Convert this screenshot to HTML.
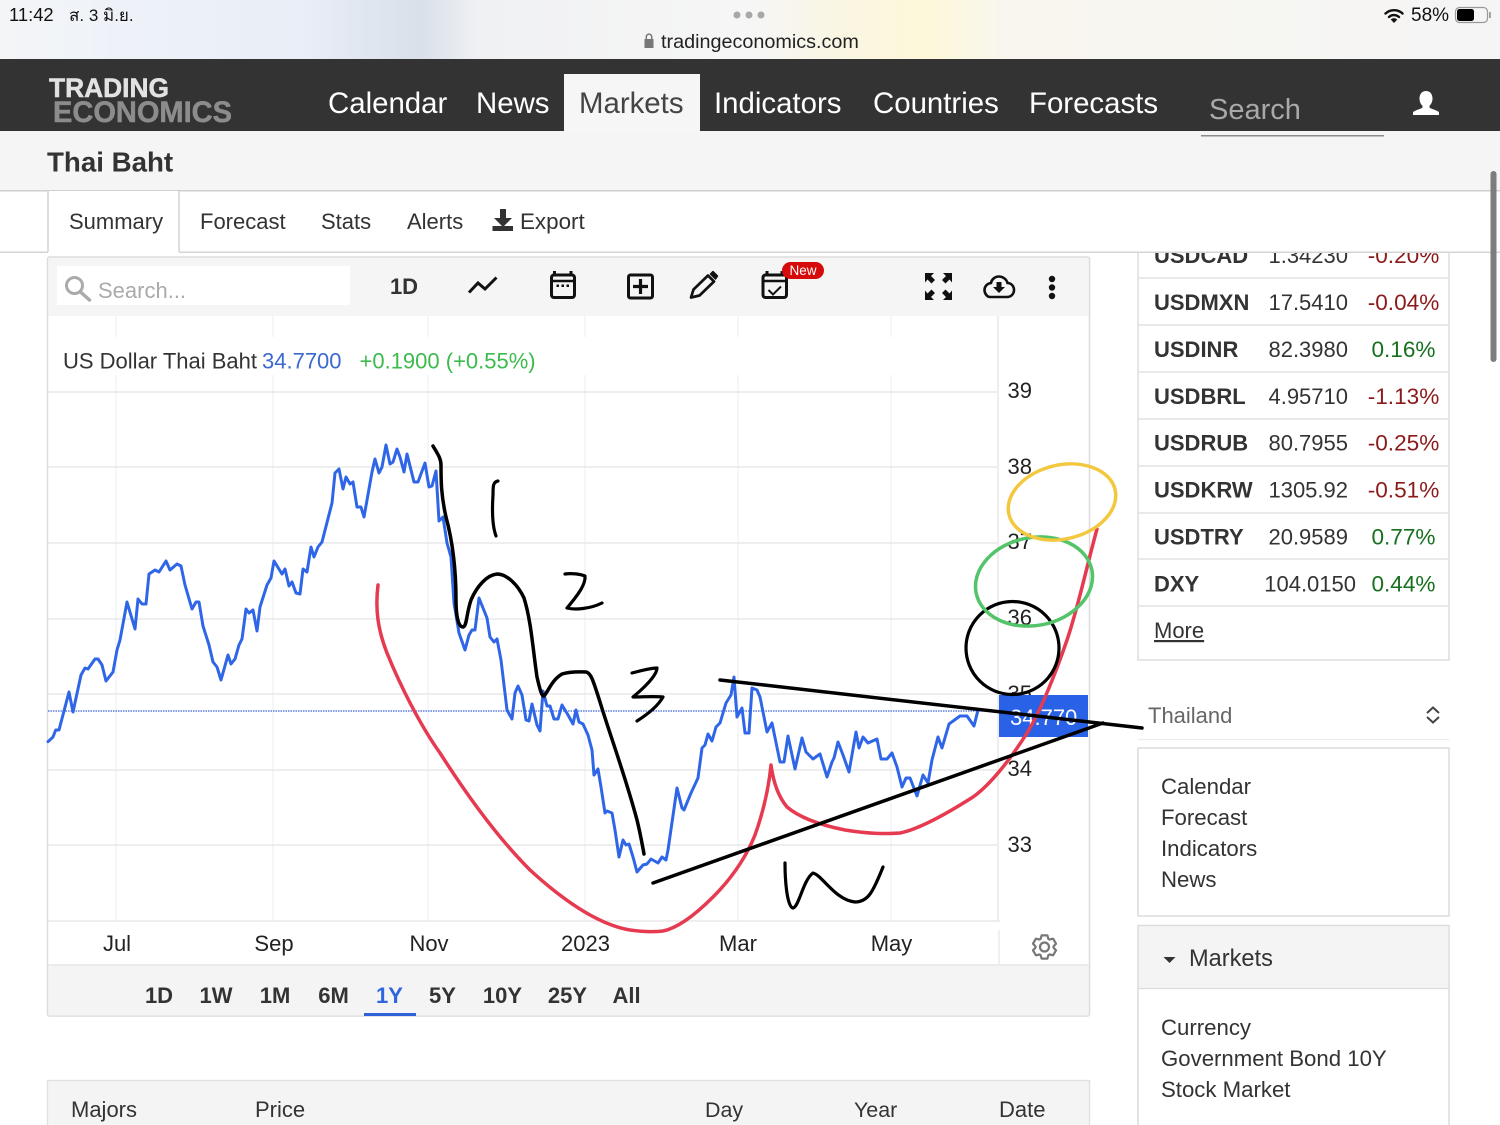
<!DOCTYPE html>
<html lang="en"><head><meta charset="utf-8"><title>Thai Baht</title>
<style>
html,body{margin:0;padding:0;background:#fff;width:1500px;height:1125px;overflow:hidden}
svg{display:block}
text{font-family:"Liberation Sans","Noto Sans CJK SC",sans-serif;font-size:22px;fill:#333}
.b{font-weight:700}
.nav{font-size:29.4px;fill:#fff}
.ax{fill:#222}
.r{fill:#8b1a1a;font-size:22.6px}.g{fill:#17701f;font-size:22.6px}
.s{font-size:22.2px}
.hand{fill:none;stroke-linecap:round;stroke-linejoin:round}
</style></head><body>
<svg width="1500" height="1125" viewBox="0 0 1500 1125" xmlns="http://www.w3.org/2000/svg">
<defs>
<linearGradient id="st" x1="0" x2="1" y1="0" y2="0">
<stop offset="0" stop-color="#f4f5f7"/><stop offset=".08" stop-color="#eef2f8"/><stop offset=".2" stop-color="#e9eef7"/><stop offset=".28" stop-color="#d9e0ea"/><stop offset=".32" stop-color="#f0f1f3"/><stop offset=".5" stop-color="#f6f6f6"/><stop offset=".57" stop-color="#fbf6e0"/><stop offset=".62" stop-color="#fdf8da"/><stop offset=".67" stop-color="#f8f6ee"/><stop offset="1" stop-color="#f5f5f6"/>
</linearGradient>
</defs>
<rect width="1500" height="1125" fill="#fff"/>

<!-- right market table -->
<rect x="1138" y="240" width="311" height="420" fill="#fff" stroke="#ddd" stroke-width="1.5"/>
<g stroke="#e2e2e2" stroke-width="1.5"><path d="M1138 278H1449M1138 325H1449M1138 372H1449M1138 419H1449M1138 466H1449M1138 513H1449M1138 559H1449M1138 606H1449"/></g>
<g>
<text class="b" x="1154" y="263">USDCAD</text><text x="1348" y="263" text-anchor="end">1.34230</text><text class="r" x="1403.5" y="263" text-anchor="middle">-0.20%</text>
<text class="b" x="1154" y="310">USDMXN</text><text x="1348" y="310" text-anchor="end">17.5410</text><text class="r" x="1403.5" y="310" text-anchor="middle">-0.04%</text>
<text class="b" x="1154" y="357">USDINR</text><text x="1348" y="357" text-anchor="end">82.3980</text><text class="g" x="1403.5" y="357" text-anchor="middle">0.16%</text>
<text class="b" x="1154" y="404">USDBRL</text><text x="1348" y="404" text-anchor="end">4.95710</text><text class="r" x="1403.5" y="404" text-anchor="middle">-1.13%</text>
<text class="b" x="1154" y="450.5">USDRUB</text><text x="1348" y="450.5" text-anchor="end">80.7955</text><text class="r" x="1403.5" y="450.5" text-anchor="middle">-0.25%</text>
<text class="b" x="1154" y="497.5">USDKRW</text><text x="1348" y="497.5" text-anchor="end">1305.92</text><text class="r" x="1403.5" y="497.5" text-anchor="middle">-0.51%</text>
<text class="b" x="1154" y="544.5">USDTRY</text><text x="1348" y="544.5" text-anchor="end">20.9589</text><text class="g" x="1403.5" y="544.5" text-anchor="middle">0.77%</text>
<text class="b" x="1154" y="591.5">DXY</text><text x="1356" y="591.5" text-anchor="end">104.0150</text><text class="g" x="1403.5" y="591.5" text-anchor="middle">0.44%</text>
<text x="1154" y="638" text-decoration="underline">More</text>
</g>

<!-- status bar -->
<rect width="1500" height="59" fill="url(#st)"/>
<text x="9" y="21" style="font-size:18.4px;fill:#111">11:42</text>
<text x="69" y="21" style="font-size:17px;fill:#111">ส. 3 มิ.ย.</text>
<g fill="#a8a8a8"><circle cx="737" cy="15" r="3.5"/><circle cx="749" cy="15" r="3.5"/><circle cx="761" cy="15" r="3.5"/></g>
<path d="M644.500 39h9v9h-9z" fill="#777"/><path d="M646.300 39v-2.200a2.700 2.700 0 0 1 5.400 0V39" fill="none" stroke="#777" stroke-width="1.500"/>
<text x="661" y="48" style="font-size:19.800px;fill:#222">tradingeconomics.com</text>
<g fill="none" stroke="#111" stroke-width="2.400" stroke-linecap="round"><path d="M1385.500 13.500a12.500 12.500 0 0 1 17 0"/><path d="M1389 17a7.500 7.500 0 0 1 10 0"/></g>
<path d="M1394 23l-3.300-3.500a4.800 4.800 0 0 1 6.600 0z" fill="#111"/>
<text x="1411" y="21" style="font-size:19px;fill:#111">58%</text>
<rect x="1455.500" y="7.500" width="32" height="15" rx="4" fill="none" stroke="#999" stroke-width="1.200"/>
<rect x="1457" y="9" width="17" height="12" rx="2.500" fill="#000"/>
<rect x="1489" y="12" width="1.800" height="6" fill="#999"/>

<!-- header -->
<rect y="59" width="1500" height="72" fill="#333"/>
<text class="b" x="49" y="97" textLength="120" lengthAdjust="spacingAndGlyphs" style="font-size:26.400px;fill:#e2e2e2;stroke:#e2e2e2;stroke-width:.5">TRADING</text>
<text class="b" x="53" y="122" textLength="179" lengthAdjust="spacingAndGlyphs" style="font-size:30px;fill:#8c8c8c;stroke:#8c8c8c;stroke-width:.5">ECONOMICS</text>
<rect x="564" y="74" width="136" height="58" fill="#f6f6f6"/>
<text class="nav" x="328" y="113">Calendar</text>
<text class="nav" x="476" y="113">News</text>
<text class="nav" x="579" y="113" style="fill:#444">Markets</text>
<text class="nav" x="714" y="113">Indicators</text>
<text class="nav" x="873" y="113">Countries</text>
<text class="nav" x="1029" y="113">Forecasts</text>
<text x="1209" y="119" style="font-size:29px;fill:#a9a9a9">Search</text>
<path d="M1426 91c-4.300 0-6.500 3.400-6.500 7.500 0 3.200 1.300 5.800 3 7.300v1.700c-1 1.200-6 2.300-9.500 4.500v3h26v-3c-3.500-2.200-8.500-3.300-9.500-4.500v-1.700c1.700-1.500 3-4.100 3-7.300 0-4.100-2.200-7.500-6.500-7.500z" fill="#fff"/>

<!-- title strip -->
<rect y="131" width="1500" height="59" fill="#f5f5f5"/>
<rect x="1201" y="135" width="183" height="1.500" fill="#8a8a8a"/>
<rect x="564" y="131" width="136" height="2" fill="#f6f6f6"/>
<text class="b" x="47" y="171.500" style="font-size:27.700px">Thai Baht</text>

<!-- tabs strip -->
<rect y="190.500" width="1500" height="62" fill="#fff"/>
<rect y="190" width="1500" height="1.500" fill="#cfcfcf"/>
<rect y="251.500" width="1500" height="1.500" fill="#d4d4d4"/>
<rect x="48" y="191" width="131" height="64" fill="#fff"/>
<path d="M48 191V252M179 191V252" stroke="#d4d4d4" stroke-width="1.500"/>
<text x="69" y="229">Summary</text>
<text x="200" y="229">Forecast</text>
<text x="321" y="229">Stats</text>
<text x="407" y="229">Alerts</text>
<path d="M500 209h6v9h6l-9 9-9-9h6z" fill="#333"/>
<rect x="492.500" y="226" width="20.500" height="5" fill="#333"/>
<text x="520" y="229" style="font-size:22.400px">Export</text>

<!-- scrollbar -->
<rect x="1490.500" y="171" width="6" height="191" rx="3" fill="#7d7d7d"/>

<!-- chart card -->
<rect x="47.500" y="257" width="1042" height="759" rx="2" fill="#fff" stroke="#dcdcdc" stroke-width="1.500"/>
<rect x="48.500" y="258" width="1040" height="58" fill="#f5f5f5"/>
<rect x="57" y="266" width="293" height="39" fill="#fff"/>
<circle cx="74.500" cy="285.500" r="8" fill="none" stroke="#aaa" stroke-width="3"/>
<path d="M80.500 292L89.500 300" stroke="#aaa" stroke-width="3.500" stroke-linecap="round"/>
<text x="98" y="298" style="fill:#aaa">Search...</text>
<text class="b" x="404" y="294" text-anchor="middle">1D</text>
<path d="M469 292.500L478 283L485 289L496.500 277.500" fill="none" stroke="#111" stroke-width="3"/>
<g fill="none" stroke="#111" stroke-width="3">
<rect x="551.500" y="275" width="23" height="22.500" rx="2.500"/>
<path d="M554.500 271v4M571 271v4"/>
<path d="M551.500 281h23" stroke-width="2.600"/>
</g>
<g fill="#111"><rect x="556.500" y="284.500" width="2.500" height="2.500"/><rect x="561.500" y="284.500" width="2.500" height="2.500"/><rect x="566.500" y="284.500" width="2.500" height="2.500"/></g>
<rect x="628.500" y="275" width="24" height="23" rx="2" fill="none" stroke="#111" stroke-width="3"/>
<path d="M640.500 279v15M633 286.500h15" stroke="#111" stroke-width="3.200"/>
<path d="M691 297.500L693.500 289.500L708 275.500L714 281.500L699.500 295.500Z" fill="none" stroke="#111" stroke-width="2.700" stroke-linejoin="round"/>
<path d="M710.500 274L713 271.500L717.500 276L715.500 279Z" fill="#111" stroke="#111" stroke-width="1.500" stroke-linejoin="round"/>
<g fill="none" stroke="#111" stroke-width="3">
<rect x="763" y="275" width="23.500" height="22.500" rx="2.500"/>
<path d="M767 271v4M782 271v4"/>
<path d="M763 281h23.500" stroke-width="2.600"/>
<path d="M768.500 290l4.500 4.500 8-8" stroke-width="2"/>
</g>
<rect x="782" y="262" width="42" height="17" rx="8.500" fill="#d60a0a"/>
<text x="803" y="275" text-anchor="middle" style="font-size:13.500px;fill:#fff">New</text>
<g fill="#111">
<path d="M925 273h9l-3 3 4 4-3.500 3.500-4-4-2.500 3z"/>
<path d="M952 273h-9l3 3-4 4 3.500 3.500 4-4 2.500 3z"/>
<path d="M925 300h9l-3-3 4-4-3.500-3.500-4 4-2.500-3z"/>
<path d="M952 300h-9l3-3-4-4 3.500-3.500 4 4 2.500-3z"/>
</g>
<path d="M990 297h17c4 0 7-3 7-7s-3-7-6.500-7c-1-4-5-6.500-8.500-6.500-4 0-7.500 3-8 6.500-4 .5-6.500 3.500-6.500 7 0 4 3 7 5.500 7z" fill="none" stroke="#111" stroke-width="2.600"/>
<path d="M996.500 282h5v5h3.500l-6 6-6-6h3.500z" fill="#111"/>
<g fill="#111"><circle cx="1052" cy="279" r="3.200"/><circle cx="1052" cy="287.500" r="3.200"/><circle cx="1052" cy="296" r="3.200"/></g>

<!-- grid -->
<g stroke="#eef0f6" stroke-width="1.200">
<path d="M116 316V921M273 316V921M428 316V921M585 316V921M738 316V921M891 316V921"/>
</g>
<rect x="49" y="337" width="940" height="38" fill="#fff"/>
<g stroke="#e4e4e4" stroke-width="1.300">
<path d="M48 392H997M48 467H997M48 543H997M48 619H997M48 694H997M48 770H997M48 845H997M48 921H1000"/>
</g>
<path d="M998 316V921" stroke="#e4e4e4" stroke-width="1.300"/>
<path d="M999 930V965" stroke="#e8e8e8" stroke-width="1.300"/>
<path d="M48 711H999" stroke="#3a63dd" stroke-width="1.200" stroke-dasharray="1.500 1"/>

<text x="63" y="368.500">US Dollar Thai Baht</text>
<text x="262" y="368.500" style="fill:#3c69d0">34.7700</text>
<text x="359.500" y="368.500" style="fill:#3dba4e">+0.1900 (+0.55%)</text>

<!-- y axis -->
<g>
<text class="ax" x="1007.500" y="398">39</text>
<text class="ax" x="1007.500" y="474">38</text>
<text class="ax" x="1007.500" y="549">37</text>
<text class="ax" x="1007.500" y="625">36</text>
<text class="ax" x="1007.500" y="701">35</text>
<text class="ax" x="1007.500" y="776">34</text>
<text class="ax" x="1007.500" y="852">33</text>
</g>
<rect x="999" y="695" width="89" height="42" fill="#2962e6"/>
<text x="1010" y="725" style="fill:#fff">34.770</text>

<!-- blue price line -->
<polyline class="hand" stroke="#2f66e8" stroke-width="3" points="48,741.700 53,737 55.700,730 59,730 69,692 73,712 81,675 85,668 88,669 95,659 98,659 102,665 106,681 113,672 117,650 120,640 127,602 135,629 138,599 142,604 146,604 149,574 155,570 159,572 166,561 170,570 177,564 181,566 185,585 192,609 196,602 199,602 203,626 209,645 213,662 217,667 221,680 228,655 231,664 235,659 239,645 242,639 246,609 249,613 253,610 257,631 260,607 267,585 271,578 274,561 282,574 285,569 289,586 292,582 296,593 300,594 303,569 307,572 311,547 314,557 318,547 322,542 332,503 335,473 339,469 343,489 346,477 350,484 353,482 357,507 361,507 364,517 372,472 375,459 379,473 382,467 386,445 390,464 393,462 397,449 400,457 404,472 407,454 414,482 418,482 425,463 429,487 432,486 436,471 439,521 443,517 447,543 451,557 454,603 459,633 465,650 469,635 472,630 475,630 479,598 487,618 490,637 494,642 497,639 501,660 507,710 512,719 515,693 518,686 522,695 526,720 529,721 532,704 537,725 540,731 543,691 547,706 550,706 554,719 558,719 562,705 568,715 573,724 576,710 579,722 583,724 588,735 592,750 594,775 598,769 601,787 605,813 607,811 612,813 615,830 619,857 623,840 626,845 629,844 633,857 637,872 643,865 647,864 651,859 658,863 662,857 666,860 668,850 677,788 682,808 684,810 691,793 698,778 702,748 705,745 708,734 712,741 716,727 720,723 726,703 731,695 734,677 737,717 742,708 745,733 749,733 752,688 757,690 760,697 767,732 772,723 780,762 784,762 788,736 795,769 802,738 806,752 813,759 820,754 827,777 832,762 834,758 838,742 843,755 849,772 856,732 859,748 863,737 868,743 877,739 881,759 887,759 892,753 897,767 902,787 906,778 910,778 917,796 923,775 928,783 932,760 938,737 942,748 949,724 960,716 967,716 974,726 978,710"/>

<!-- hand drawn annotations -->
<path class="hand" stroke="#e63a50" stroke-width="3.500" d="M378 585C375 610 378 630 387 653C400 685 420 725 440 753C470 800 500 840 530 870C565 902 600 925 630 930C645 932 655 932 663 931C678 928 695 915 713 897C730 880 745 860 755 835C764 810 769 785 771 765C773 780 777 795 787 807C800 818 820 825 845 830C870 834 885 834 900 833C915 830 940 818 973 797C990 785 1010 760 1027 733C1040 712 1055 675 1067 640C1078 608 1087 565 1097 529"/>
<path class="hand" stroke="#000" stroke-width="3.500" d="M433 446C437 453 441 458 441 465C441 480 441 495 446 517C453 543 456 570 456 600C456 615 458 627 463 627C467 626 466 615 471 600C477 586 487 575 497 574C507 574 518 585 524 598C531 620 533 650 537 677C540 690 542 697 544 696C549 690 552 680 562 674C572 671 580 672 586 672C591 673 593 680 600 702C610 735 625 775 637 820C640 832 642 843 644 854"/>
<path class="hand" stroke="#000" stroke-width="3.200" d="M498 481C493 482 493 486 493 495C492 510 492 525 496 536"/>
<path class="hand" stroke="#000" stroke-width="3.200" d="M565 574C572 573 580 574 585 576C586 584 578 595 567 608C575 610 590 609 602 603"/>
<path class="hand" stroke="#000" stroke-width="3.200" d="M632 673C640 671 650 668 657 668C657 675 645 687 633 697C643 697 655 696 663 697C658 706 648 714 637 721"/>
<path class="hand" stroke="#000" stroke-width="3.500" d="M720 680L1142 728"/>
<path class="hand" stroke="#000" stroke-width="3.500" d="M653 883L1103 723"/>
<path class="hand" stroke="#000" stroke-width="3.200" d="M785 863C785 880 787 907 793 908C799 907 803 880 813 873C822 875 835 900 855 902C868 902 873 892 883 867"/>
<circle class="hand" cx="1012.500" cy="648" r="46.500" stroke="#000" stroke-width="3.200"/>
<ellipse class="hand" cx="1034" cy="581.500" rx="59" ry="44" stroke="#54c46a" stroke-width="3.500" transform="rotate(-11 1034 581.500)"/>
<ellipse class="hand" cx="1062" cy="502" rx="54.500" ry="37" stroke="#f3c73e" stroke-width="3.500" transform="rotate(-13 1062 502)"/>

<!-- x axis -->
<g>
<text class="ax" x="117" y="951" text-anchor="middle">Jul</text>
<text class="ax" x="274" y="951" text-anchor="middle">Sep</text>
<text class="ax" x="429" y="951" text-anchor="middle">Nov</text>
<text class="ax" x="585.500" y="951" text-anchor="middle">2023</text>
<text class="ax" x="738" y="951" text-anchor="middle">Mar</text>
<text class="ax" x="891.500" y="951" text-anchor="middle">May</text>
</g>
<g transform="translate(1044.500 947)">
<path d="M-3.900-8.100L-2.900-11.600L2.900-11.600L3.900-8.100L5-7.500L8.600-8.300L11.500-3.300L9-.6L9 .6L11.500 3.300L8.600 8.300L5 7.500L3.900 8.100L2.900 11.600L-2.900 11.600L-3.900 8.100L-5 7.500L-8.600 8.300L-11.500 3.300L-9 .6L-9-.6L-11.500-3.300L-8.600-8.300L-5-7.500Z" fill="none" stroke="#777" stroke-width="2.200" stroke-linejoin="round"/>
<circle r="4.500" fill="none" stroke="#777" stroke-width="2.200"/>
</g>

<!-- range bar -->
<rect x="48.500" y="965" width="1040" height="50.500" fill="#f4f4f4"/>
<path d="M48 965H1089" stroke="#e2e2e2" stroke-width="1.300"/>
<g>
<text class="b" x="159" y="1003" text-anchor="middle">1D</text>
<text class="b" x="216" y="1003" text-anchor="middle">1W</text>
<text class="b" x="275" y="1003" text-anchor="middle">1M</text>
<text class="b" x="333.500" y="1003" text-anchor="middle">6M</text>
<text class="b" x="389.500" y="1003" text-anchor="middle" style="fill:#2f66e0">1Y</text>
<text class="b" x="442.500" y="1003" text-anchor="middle">5Y</text>
<text class="b" x="502.500" y="1003" text-anchor="middle">10Y</text>
<text class="b" x="567.500" y="1003" text-anchor="middle">25Y</text>
<text class="b" x="626.500" y="1003" text-anchor="middle">All</text>
</g>
<rect x="364" y="1013" width="52" height="3" fill="#2f62d8"/>

<!-- lower table -->
<rect x="47.500" y="1080.500" width="1042" height="60" fill="#f4f4f4" stroke="#e0e0e0" stroke-width="1.300"/>
<text x="71" y="1117">Majors</text>
<text x="255" y="1117">Price</text>
<text x="705" y="1117" style="font-size:21.400px">Day</text>
<text x="854" y="1117" style="font-size:21.400px">Year</text>
<text x="999" y="1117">Date</text>

<!-- right lower column -->
<text x="1148" y="723" style="fill:#666">Thailand</text>
<path d="M1427 713l6-5.500 6 5.500M1427 717l6 5.500 6-5.500" fill="none" stroke="#444" stroke-width="2"/>
<path d="M1138 739.500H1449" stroke="#ececec" stroke-width="1.300"/>
<rect x="1138" y="748" width="311" height="168" fill="#fff" stroke="#dcdcdc" stroke-width="1.500"/>
<text class="s" x="1161" y="794">Calendar</text>
<text class="s" x="1161" y="825">Forecast</text>
<text class="s" x="1161" y="856">Indicators</text>
<text class="s" x="1161" y="887">News</text>
<rect x="1138" y="925.500" width="311" height="220" fill="#fff" stroke="#dcdcdc" stroke-width="1.500"/>
<rect x="1139" y="926.500" width="309" height="62" fill="#f4f4f4"/>
<path d="M1138 988.500H1449" stroke="#dcdcdc" stroke-width="1.300"/>
<path d="M1163.500 957h12l-6 6z" fill="#333"/>
<text x="1189" y="966" style="font-size:23.600px">Markets</text>
<text class="s" x="1161" y="1035">Currency</text>
<text class="s" x="1161" y="1066">Government Bond 10Y</text>
<text class="s" x="1161" y="1097">Stock Market</text>
</svg>
</body></html>
